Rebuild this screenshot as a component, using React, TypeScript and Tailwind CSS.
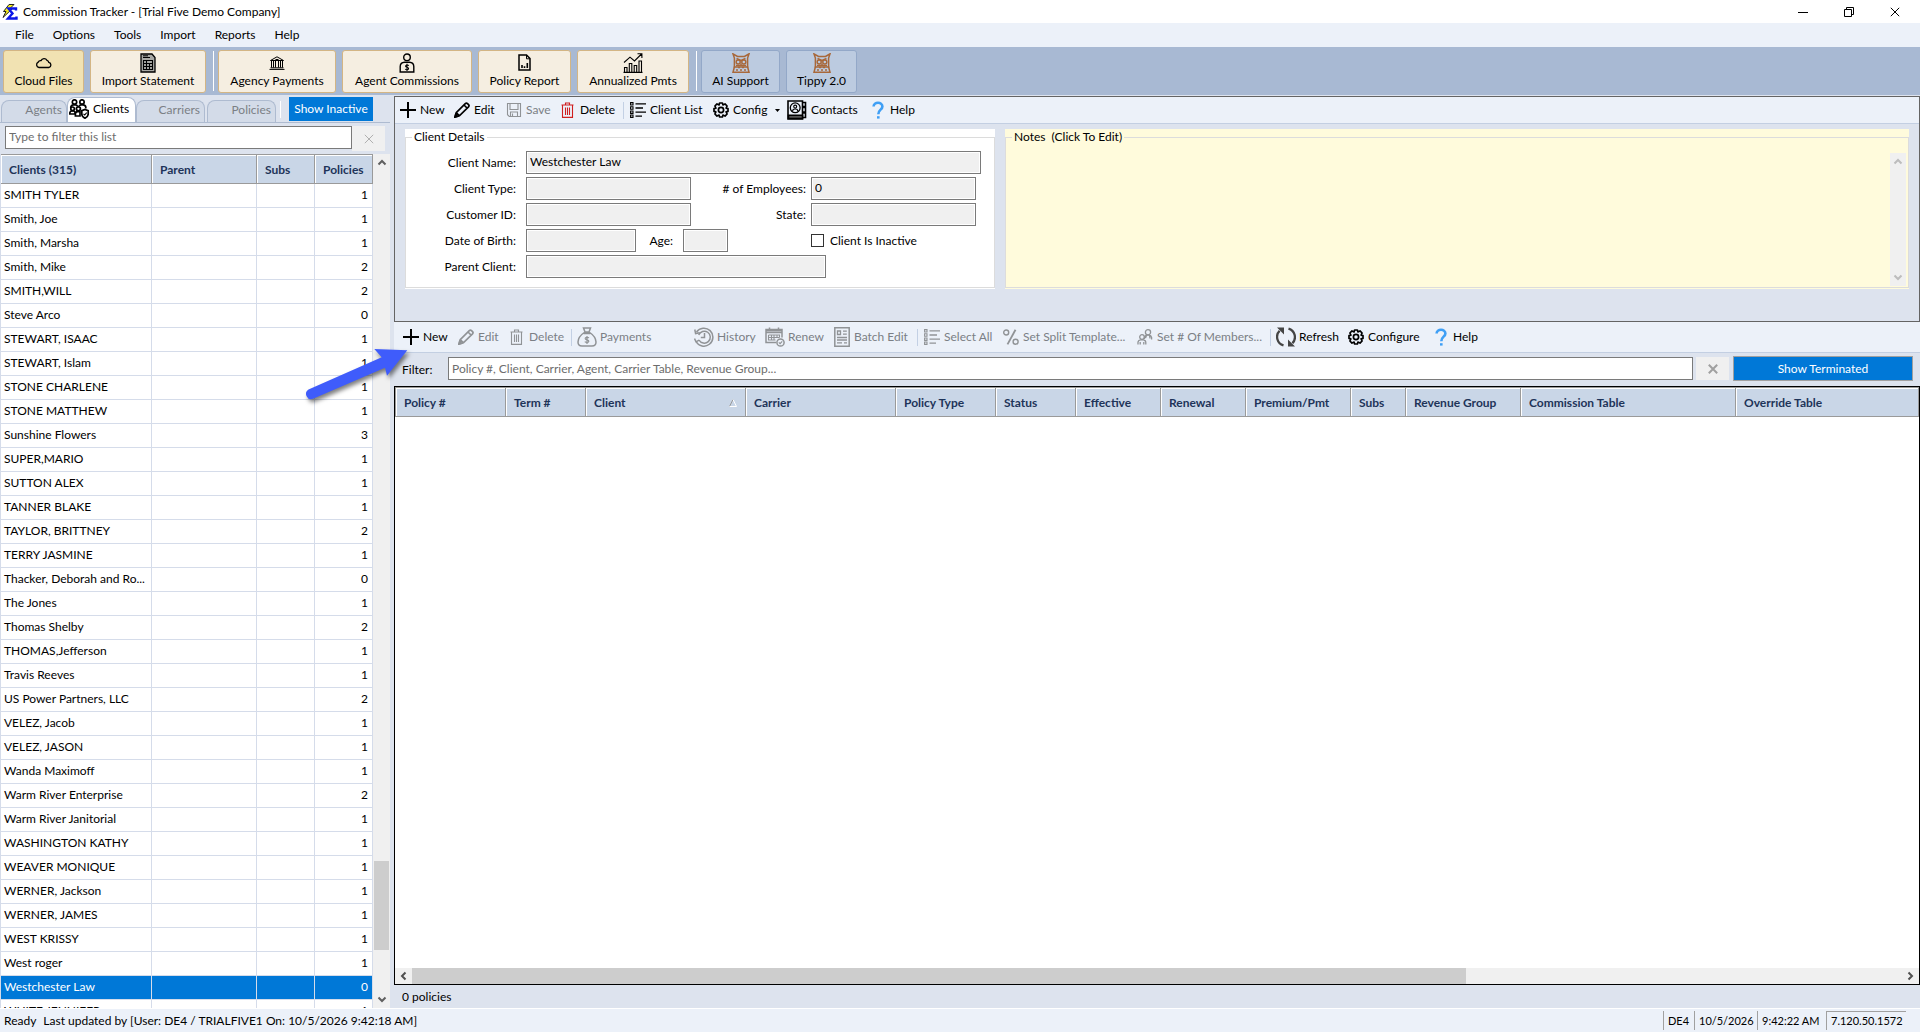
import { useState } from "react";
import type { ReactNode } from "react";

type Client = { name: string; policies: number };

const clients: Client[] = [
  { name: "SMITH TYLER", policies: 1 },
  { name: "Smith, Joe", policies: 1 },
  { name: "Smith, Marsha", policies: 1 },
  { name: "Smith, Mike", policies: 2 },
  { name: "SMITH,WILL", policies: 2 },
  { name: "Steve Arco", policies: 0 },
  { name: "STEWART, ISAAC", policies: 1 },
  { name: "STEWART, Islam", policies: 1 },
  { name: "STONE CHARLENE", policies: 1 },
  { name: "STONE MATTHEW", policies: 1 },
  { name: "Sunshine Flowers", policies: 3 },
  { name: "SUPER,MARIO", policies: 1 },
  { name: "SUTTON ALEX", policies: 1 },
  { name: "TANNER BLAKE", policies: 1 },
  { name: "TAYLOR, BRITTNEY", policies: 2 },
  { name: "TERRY JASMINE", policies: 1 },
  { name: "Thacker, Deborah and Ro...", policies: 0 },
  { name: "The Jones", policies: 1 },
  { name: "Thomas Shelby", policies: 2 },
  { name: "THOMAS,Jefferson", policies: 1 },
  { name: "Travis Reeves", policies: 1 },
  { name: "US Power Partners, LLC", policies: 2 },
  { name: "VELEZ, Jacob", policies: 1 },
  { name: "VELEZ, JASON", policies: 1 },
  { name: "Wanda Maximoff", policies: 1 },
  { name: "Warm River Enterprise", policies: 2 },
  { name: "Warm River Janitorial", policies: 1 },
  { name: "WASHINGTON KATHY", policies: 1 },
  { name: "WEAVER MONIQUE", policies: 1 },
  { name: "WERNER, Jackson", policies: 1 },
  { name: "WERNER, JAMES", policies: 1 },
  { name: "WEST KRISSY", policies: 1 },
  { name: "West roger", policies: 1 },
  { name: "Westchester Law", policies: 0 },
  { name: "WHITE JENNIFER", policies: 1 },
];

const policyColumns = [
  { label: "Policy #", width: "w-[110px]" },
  { label: "Term #", width: "w-[80px]" },
  { label: "Client", width: "w-[160px]", sorted: true },
  { label: "Carrier", width: "w-[150px]" },
  { label: "Policy Type", width: "w-[100px]" },
  { label: "Status", width: "w-[80px]" },
  { label: "Effective", width: "w-[85px]" },
  { label: "Renewal", width: "w-[85px]" },
  { label: "Premium/Pmt", width: "w-[105px]" },
  { label: "Subs", width: "w-[55px]" },
  { label: "Revenue Group", width: "w-[115px]" },
  { label: "Commission Table", width: "w-[215px]" },
  { label: "Override Table", width: "" },
];

/* ---------- icons ---------- */

const Svg = ({
  w = 16,
  h = 16,
  box,
  sw = 1.5,
  children,
}: {
  w?: number;
  h?: number;
  box?: string;
  sw?: number;
  children: ReactNode;
}) => (
  <svg
    width={w}
    height={h}
    viewBox={box ?? `0 0 ${w} ${h}`}
    fill="none"
    stroke="currentColor"
    strokeWidth={sw}
    className="shrink-0"
    aria-hidden="true"
  >
    {children}
  </svg>
);

const AppLogo = () => (
  <Svg>
    <path d="M7 .5 12 .5 7.5 5H10L1 13.5 4 7.5H1.5Z" fill="#f5ee1c" stroke="#222" strokeWidth={1} />
    <path d="M14 6.5V4.5H6.5L10.5 9.5 6 14.5H14.5V12.5" stroke="#0b16e8" strokeWidth={2.4} />
  </Svg>
);

const CloudIcon = () => (
  <Svg w={17} h={12} sw={1.3}>
    <path d="M4 10.5A2.8 2.8 0 0 1 3.2 5.2 2.6 2.6 0 0 1 6 3.6 3.4 3.4 0 0 1 12 3.3 2.8 2.8 0 0 1 13.8 5.4 2.6 2.6 0 0 1 13.8 10.5Z" />
  </Svg>
);

const StatementIcon = () => (
  <Svg w={16} h={20} sw={1.3}>
    <path d="M1 1H12L15 4.5V19H1Z" fill="#a8a8a4" />
    <path d="M3 4.5H10M3 2.8H8" strokeWidth={1} />
    <path d="M3.5 7.5H12.5V16.5H3.5ZM3.5 10.5H12.5M3.5 13.5H12.5M6.5 7.5V16.5M9.5 10.5V16.5" strokeWidth={1.1} />
  </Svg>
);

const BankIcon = () => (
  <Svg w={16} h={14} sw={1}>
    <path d="M1.5 4.5 8 .8 14.5 4.5ZM.5 13.4H15.5M1.5 11.8H14.5M2.5 5V11.5M4.5 5V11.5M6.5 5V11.5M9.5 5V11.5M11.5 5V11.5M13.5 5V11.5" />
    <path d="M6.5 3.5H9.5" />
  </Svg>
);

const AgentIcon = () => (
  <Svg w={16} h={20} sw={1.4}>
    <circle cx="8" cy="4.3" r="3.3" />
    <path d="M1.2 19V13.5A4.5 4.5 0 0 1 5.5 9.2H10.5A4.5 4.5 0 0 1 14.8 13.5V19Z" />
    <path d="M9.8 12.6C8.8 11.6 6.4 11.9 6.6 13.3 6.9 14.6 9.5 14.1 9.6 15.6 9.6 17 7.2 17.1 6.2 16M8 10.8V18" strokeWidth={1.1} />
  </Svg>
);

const ReportIcon = () => (
  <Svg w={13} h={17} sw={1.5}>
    <path d="M1 1H8.5L12 4.5V16H1Z" />
    <path d="M8.5 1V4.8H12" strokeWidth={1} />
    <path d="M4 14V11M6.5 14V12.2M9.3 14V9" strokeWidth={1.6} />
  </Svg>
);

const ChartIcon = () => (
  <Svg w={20} h={20} sw={1.1}>
    <path d="M.5 19.4H19.5M1.5 19V14.5H4V19M6.3 19V10.5H8.8V19M11.2 19V12.5H13.7V19M16 19V8H18.5V19" />
    <path d="M1 9.5 7 4.2 11.5 8 18.5 1M14.5 .8H18.9V5" />
  </Svg>
);

const OwlIcon = () => (
  <Svg w={18} h={20} sw={1.5}>
    <g stroke="#a8683a">
      <path d="M1 .8 5.5 3.5H12.5L17 .8 15.6 5V14H2.4V5Z" />
      <path d="M2.5 13.5 1 19.2H17L15.5 13.5" />
      <path d="M4.5 5.5 9 7.5 13.5 5.5M4 17H6M8 17H10M12 17H14M6 14.5H8M10 14.5H12" />
      <circle cx="6.2" cy="9" r="2" />
      <circle cx="11.8" cy="9" r="2" />
      <path d="M9 10.5V13M4 12.5H14" />
    </g>
  </Svg>
);

const GroupIcon = () => (
  <Svg w={20} h={20} sw={1.7}>
    <circle cx="5.5" cy="3" r="2.2" />
    <circle cx="13" cy="3" r="2.2" />
    <path d="M1.8 9V8A2.8 2.8 0 0 1 4.5 5.8H6.5A2.8 2.8 0 0 1 8.8 7.5M9.8 7.5A2.8 2.8 0 0 1 12 5.8H14A2.8 2.8 0 0 1 16.8 8V9.5" />
    <circle cx="3.6" cy="9.8" r="1.8" />
    <circle cx="9.4" cy="9.8" r="2" />
    <path d="M.8 15V14A2.2 2.2 0 0 1 3 12H4.5A2 2 0 0 1 6 13V15ZM6.4 17V14.8A2.4 2.4 0 0 1 8.6 12.6H11V17Z" />
    <path d="M16 10.5 19.2 11.7V15C19.2 17 17.6 18.4 16 19.2 14.4 18.4 12.8 17 12.8 15V11.7Z" />
    <path d="M14.5 14.8 15.7 16 17.7 13.6" strokeWidth={1.1} />
  </Svg>
);

const PlusIcon = () => (
  <Svg sw={2}>
    <path d="M8 0V16M0 8H16" />
  </Svg>
);

const PencilIcon = () => (
  <Svg sw={1.7}>
    <path d="M1 15 2.2 10.6 11.3 1.6A1.6 1.6 0 0 1 13.5 1.6L14.5 2.6A1.6 1.6 0 0 1 14.5 4.8L5.4 13.8ZM2.2 10.6 5.4 13.8M10 3 13 6" />
    <path d="M1 15 1.7 12.6 3.4 14.3Z" fill="currentColor" />
  </Svg>
);

const SaveIcon = () => (
  <Svg sw={1.1}>
    <path d="M1.5 1.5H14.5V14.5H3.3L1.5 12.7ZM4 1.5V7.5H12V1.5M4.5 14.5V10H11.5V14.5M6.5 11.5V14.5" />
  </Svg>
);

const TrashIcon = () => (
  <Svg sw={1.1}>
    <path d="M1.5 3H13.5M5.5 3V1H9.5V3M2.5 3.2V15.4H12.5V3.2M5.5 5.5V13M7.5 5.5V13M9.5 5.5V13" />
  </Svg>
);

const ListIcon = () => (
  <Svg sw={1.1}>
    <path d="M.6 .6H3V3H.6ZM.6 4.8H3V7.2H.6ZM.6 9H3V11.4H.6ZM.6 13H3V15.4H.6Z" />
    <path d="M5.5 1.8H16M5.5 6H13M5.5 10.2H16M5.5 14.2H12" strokeWidth={1.3} />
  </Svg>
);

const GearIcon = () => (
  <Svg sw={1.7}>
    <path d="M6.6 1H9.4L9.9 2.9 12 1.9 14.1 4 13.1 6.1 15 6.6V9.4L13.1 9.9 14.1 12 12 14.1 9.9 13.1 9.4 15H6.6L6.1 13.1 4 14.1 1.9 12 2.9 9.9 1 9.4V6.6L2.9 6.1 1.9 4 4 1.9 6.1 2.9Z" strokeLinejoin="round" />
    <circle cx="8" cy="8" r="2.6" />
  </Svg>
);

const ContactsIcon = () => (
  <Svg w={20} h={20} sw={1.6}>
    <path d="M1 1H15.5V19H1ZM15.5 2.5H18.5V6.5H15.5M15.5 7.5H18.5V12H15.5M15.5 13H18.5V17.5H15.5" />
    <path d="M1.5 15.2H15.5V18.5H1.5Z" fill="#555" />
    <circle cx="8.2" cy="7.8" r="4.9" strokeWidth={1.3} />
    <circle cx="8.2" cy="6.6" r="1.5" strokeWidth={1.1} />
    <path d="M5.6 11C5.8 8.4 10.6 8.4 10.8 11" strokeWidth={1.1} />
  </Svg>
);

const HelpIcon = () => (
  <Svg w={12} h={18} sw={2.6}>
    <g stroke="#3f9ff5">
      <path d="M1.6 5.6C1.6 .6 10.4 .6 10.4 5.4 10.4 8.8 6.3 8.6 6.3 13.2" />
      <path d="M6.3 15.2V17.6" />
    </g>
  </Svg>
);

const MoneyBagIcon = () => (
  <Svg w={20} h={20} sw={1.5}>
    <path d="M6.5 1H13.5L12 5H8ZM8 5C3.5 8 1 11.5 1 15 1 18 3 19 5 19H15C17 19 19 18 19 15 19 11.5 16.5 8 12 5M6.8 6.6H13.2" />
    <path d="M12 10.9C10.8 9.9 8 10.2 8.2 11.7 8.5 13.1 11.8 12.6 11.8 14.2 11.8 15.7 9 15.8 7.8 14.6M10 9V17" strokeWidth={1.2} />
  </Svg>
);

const HistoryIcon = () => (
  <Svg w={20} h={20} sw={1.5}>
    <path d="M2.5 5A9 9 0 1 1 2 14.5M.8 2.5 1.6 6.6 5.8 5.8M.5 11.5 2 14.8 5.2 13.2" />
    <path d="M4.7 8A6 6 0 1 1 5 13M10.5 6V10.5H6.8" />
  </Svg>
);

const RenewIcon = () => (
  <Svg w={20} h={20} sw={1.5}>
    <path d="M11 15.5H1V2.5H17V10.5M1 5.5H17M4.5 .5V4M13.5 .5V4" />
    <path d="M1 3.5H17" strokeWidth={2} />
    <path d="M3.5 8H14.5V10.5M3.5 8V13H10.5M3.5 10.5H14.5M6.5 8V13M9 8V13M12 8V10.5" strokeWidth={1.1} />
    <circle cx="15.5" cy="15.5" r="3.6" />
    <path d="M13.8 15.4 15.1 16.7 17.2 14.3" strokeWidth={1.1} />
  </Svg>
);

const BatchIcon = () => (
  <Svg w={16} h={20} sw={1.5}>
    <path d="M.8 .8H15.2V19.2H.8Z" />
    <path d="M3.5 4H6.5V7.5H3.5ZM9 4.2H12.8M9 7.2H12.8M3 10.5H13M3 13H13M3 15.8H8M10 15.8H13" strokeWidth={1.3} />
  </Svg>
);

const PercentIcon = () => (
  <Svg sw={1.4}>
    <circle cx="3.2" cy="3.5" r="2.5" />
    <circle cx="12.6" cy="12.7" r="2.5" />
    <path d="M12.5 .8 4.5 15.4" strokeWidth={1.8} />
  </Svg>
);

const MembersIcon = () => (
  <Svg sw={1.3}>
    <circle cx="11" cy="3.3" r="2.6" />
    <path d="M7.5 10V8.2A3 3 0 0 1 10 6.2H12A3 3 0 0 1 14.6 8.5V10.5M9.5 6.5 8.5 9M12.5 6.5 13 9.5" />
    <circle cx="5" cy="8" r="2.3" />
    <path d="M1 15.5V13A2.8 2.8 0 0 1 3.5 10.8H6.5A2.8 2.8 0 0 1 8.8 13.5V15.5M3.2 13V15.5M6.8 13V15.5" />
  </Svg>
);

const RefreshIcon = () => (
  <Svg w={20} h={20} sw={2.3}>
    <g stroke="#454545">
      <path d="M7.5 18.4A8.8 8.8 0 0 1 3.6 3.8" />
      <path d="M12.5 1.6A8.8 8.8 0 0 1 16.4 16.2" />
      <path d="M1 .6H8V7.6Z M19 19.4H12V12.4Z" fill="#454545" stroke="none" />
    </g>
  </Svg>
);

const Chevron = ({ dir }: { dir: "up" | "down" | "left" | "right" }) => {
  const paths = {
    up: "M1.5 6.5 5 3 8.5 6.5",
    down: "M1.5 3.5 5 7 8.5 3.5",
    left: "M6.5 1.5 3 5 6.5 8.5",
    right: "M3.5 1.5 7 5 3.5 8.5",
  };
  return (
    <Svg w={10} h={10} sw={2}>
      <path d={paths[dir]} />
    </Svg>
  );
};

const CloseX = ({ sw = 1 }: { sw?: number }) => (
  <Svg w={10} h={10} sw={sw}>
    <path d="M.8 .8 9.2 9.2M9.2 .8 .8 9.2" />
  </Svg>
);

/* ---------- small pieces ---------- */

const RibbonButton = ({
  label,
  icon,
  className,
}: {
  label: string;
  icon: ReactNode;
  className: string;
}) => (
  <button
    type="button"
    className={`flex h-[43px] flex-col items-center rounded-[3px] border pt-0.5 ${className}`}
  >
    <span className="flex h-5 items-center">{icon}</span>
    <span className="leading-4">{label}</span>
  </button>
);

const ToolButton = ({
  label,
  icon,
  className,
  iconClass = "w-4",
  disabled,
  caret,
}: {
  label: string;
  icon: ReactNode;
  className?: string;
  iconClass?: string;
  disabled?: boolean;
  caret?: boolean;
}) => (
  <button
    type="button"
    disabled={disabled}
    className={`flex shrink-0 items-center gap-1 whitespace-nowrap ${
      disabled ? "text-[#7b7f85]" : "text-black"
    } ${className ?? ""}`}
  >
    <span
      className={`flex shrink-0 justify-center ${iconClass} ${
        disabled ? "text-[#909396]" : ""
      }`}
    >
      {icon}
    </span>
    {label}
    {caret && (
      <svg width="5" height="3" viewBox="0 0 5 3" className="ml-1" aria-hidden="true">
        <path d="M0 0H5L2.5 3Z" fill="#000" />
      </svg>
    )}
  </button>
);

const Separator = () => (
  <span className="mr-1.5 h-[17px] w-px shrink-0 bg-[#c3d0e4]" />
);

const RibbonSeparator = () => <span className="-mr-0.5 ml-px h-10 w-px bg-white" />;

const fieldClass =
  "h-[23px] border border-[#7a7a7a] bg-[#f0f0f0] pl-[3px] pb-0.5 outline-none ring-1 ring-inset ring-white";

const Field = ({
  id,
  label,
  value = "",
  labelClass,
  inputClass,
}: {
  id: string;
  label: string;
  value?: string;
  labelClass: string;
  inputClass: string;
}) => (
  <>
    <label htmlFor={id} className={`shrink-0 text-right ${labelClass}`}>
      {label}
    </label>
    <input id={id} readOnly defaultValue={value} className={`${fieldClass} ${inputClass}`} />
  </>
);

/* ---------- sections ---------- */

const TitleBar = () => (
  <header className="flex h-[23px] shrink-0 items-center bg-white pr-0.5 pl-0.5">
    <AppLogo />
    <h1 className="ml-[5px]">Commission Tracker - [Trial Five Demo Company]</h1>
    <div className="ml-auto flex h-full items-center">
      <button type="button" aria-label="Minimize" className="flex w-[46px] justify-center">
        <Svg w={10} h={10} sw={1}>
          <path d="M0 5.5H10" />
        </Svg>
      </button>
      <button type="button" aria-label="Restore" className="flex w-[46px] justify-center">
        <Svg w={10} h={10} sw={1}>
          <path d="M.5 2.5H7.5V9.5H.5ZM2.5 2.5V.5H9.5V7.5H7.5" />
        </Svg>
      </button>
      <button type="button" aria-label="Close" className="flex w-[46px] justify-center">
        <CloseX />
      </button>
    </div>
  </header>
);

const MenuBar = () => (
  <nav className="flex h-6 shrink-0 items-center gap-[19px] bg-[#ecf1f9] pl-[15px]">
    {["File", "Options", "Tools", "Import", "Reports", "Help"].map((item) => (
      <a key={item} href="#">
        {item}
      </a>
    ))}
  </nav>
);

const Ribbon = () => {
  const cream = "border-[#d3b584] bg-[#f5eee1]";
  const blue = "border-[#93a8c8] bg-[#bccbe0]";
  return (
    <div className="flex h-12 shrink-0 items-center gap-1.5 bg-[#a8b9d3] pl-[3px]">
      <RibbonButton label="Cloud Files" icon={<CloudIcon />} className="w-[81px] border-[#d3b584] bg-[#f1e2b2]" />
      <RibbonButton label="Import Statement" icon={<StatementIcon />} className={`w-[116px] ${cream}`} />
      <RibbonSeparator />
      <RibbonButton label="Agency Payments" icon={<BankIcon />} className={`w-[118px] ${cream}`} />
      <RibbonButton label="Agent Commissions" icon={<AgentIcon />} className={`w-[130px] ${cream}`} />
      <RibbonButton label="Policy Report" icon={<ReportIcon />} className={`w-[93px] ${cream}`} />
      <RibbonButton label="Annualized Pmts" icon={<ChartIcon />} className={`w-[112px] ${cream}`} />
      <RibbonSeparator />
      <RibbonButton label="AI Support" icon={<OwlIcon />} className={`w-[79px] ${blue}`} />
      <RibbonButton label="Tippy 2.0" icon={<OwlIcon />} className={`w-[71px] ${blue}`} />
    </div>
  );
};

const SideTabs = () => {
  const idle =
    "h-[22px] rounded-t-lg border border-b-0 border-[#aebbd0] bg-[#d3dbe8] pr-1 pb-[3px] text-right text-[#7b7f85]";
  return (
    <div className="flex h-7 shrink-0 items-end border-b border-[#aebbd0] pl-px">
      <button type="button" className={`w-[66px] ${idle}`}>
        Agents
      </button>
      <button
        type="button"
        className="flex h-[25px] w-[69px] items-center gap-1 rounded-t-lg border border-b-0 border-[#aebbd0] bg-white pb-0.5 pl-px"
      >
        <GroupIcon />
        Clients
      </button>
      <button type="button" className={`w-[69px] ${idle}`}>
        Carriers
      </button>
      <button type="button" className={`ml-0.5 w-[69px] ${idle}`}>
        Policies
      </button>
      <span className="mx-1 mb-1 h-[17px] w-px bg-white" />
      <button type="button" className="ml-1 mb-px h-6 w-[84px] bg-[#0078d7] text-white">
        Show Inactive
      </button>
    </div>
  );
};

const headCell =
  "h-[30px] border-t border-r border-b border-[#9a9a9a] bg-[#c9d6e7] px-2 pt-0.5 text-left font-bold whitespace-nowrap text-[#1e3459] shadow-[inset_1px_1px_0_#fff]";

const Sidebar = () => {
  const [filter, setFilter] = useState("");
  const [selected, setSelected] = useState("Westchester Law");
  const shown = clients.filter((c) =>
    c.name.toLowerCase().includes(filter.toLowerCase())
  );

  return (
    <aside className="flex w-[390px] shrink-0 flex-col">
      <SideTabs />
      <div className="flex shrink-0 pt-[3px] pb-[3px] pl-[5px]">
        <input
          aria-label="Filter clients"
          placeholder="Type to filter this list"
          value={filter}
          onChange={(e) => setFilter(e.target.value)}
          className="h-[23px] w-[347px] border border-[#7a7a7a] bg-white pb-0.5 pl-[3px] outline-none placeholder:text-[#6d6d6d]"
        />
        <button
          type="button"
          aria-label="Clear filter"
          onClick={() => setFilter("")}
          className="flex h-[25px] w-[33px] items-center justify-center bg-[#f0f0f0] text-[#b0b0b0]"
        >
          <CloseX />
        </button>
      </div>
      <div className="flex min-h-0 flex-1 bg-white">
        <div className="flex-1 overflow-hidden">
          <table className="w-full table-fixed border-separate border-spacing-0 border-l border-[#d5dcea]">
            <thead>
              <tr>
                <th className={`w-[151px] ${headCell}`}>Clients (315)</th>
                <th className={`w-[105px] ${headCell}`}>Parent</th>
                <th className={`w-[58px] ${headCell}`}>Subs</th>
                <th className={headCell}>Policies</th>
              </tr>
            </thead>
            <tbody>
              {shown.map((c) => {
                const cell =
                  c.name === selected
                    ? "h-6 border-b border-r border-[#d5dcea] bg-[#0078d7] pb-0.5 text-white"
                    : "h-6 border-b border-r border-[#d5dcea] pb-0.5 text-black";
                return (
                  <tr key={c.name} onClick={() => setSelected(c.name)}>
                    <td className={`overflow-hidden pl-[3px] whitespace-nowrap ${cell}`}>{c.name}</td>
                    <td className={cell} />
                    <td className={cell} />
                    <td className={`pr-1 text-right ${cell}`}>{c.policies}</td>
                  </tr>
                );
              })}
            </tbody>
          </table>
        </div>
        <div className="flex w-[17px] flex-col items-center bg-[#f0f0f0] py-1 text-[#606060]">
          <Chevron dir="up" />
          <div className="flex-1" />
          <div className="mb-11 h-[89px] w-[15px] bg-[#cdcdcd]" />
          <Chevron dir="down" />
        </div>
      </div>
    </aside>
  );
};

const ClientToolbar = () => (
  <div className="flex h-[27px] shrink-0 items-center border-b border-[#c3cfe2] bg-[#ecf1f9] pl-[5px]">
    <ToolButton label="New" icon={<PlusIcon />} className="w-[54px]" />
    <ToolButton label="Edit" icon={<PencilIcon />} className="w-[52px]" />
    <ToolButton label="Save" icon={<SaveIcon />} disabled className="w-[54px]" />
    <ToolButton
      label="Delete"
      icon={
        <span className="text-[#cf1f1f]">
          <TrashIcon />
        </span>
      }
      className="w-[63px]"
    />
    <Separator />
    <ToolButton label="Client List" icon={<ListIcon />} className="w-[83px]" />
    <ToolButton label="Config" icon={<GearIcon />} caret className="w-[74px]" />
    <ToolButton label="Contacts" icon={<ContactsIcon />} iconClass="w-5" className="w-[83px]" />
    <ToolButton label="Help" icon={<HelpIcon />} />
  </div>
);

const ClientDetails = () => (
  <section className="relative w-[590px] shrink-0 bg-white pb-px">
    <div className="mt-2 h-[151px] border border-[#dcdcdc] pt-[13px]">
      <h2 className="absolute top-0 left-[7px] bg-white px-0.5 leading-4">Client Details</h2>
      <form className="flex flex-col gap-[3px]">
        <div className="flex items-center">
          <Field id="name" label="Client Name:" value="Westchester Law" labelClass="w-[110px] mr-2.5" inputClass="w-[455px]" />
        </div>
        <div className="flex items-center">
          <Field id="type" label="Client Type:" labelClass="w-[110px] mr-2.5" inputClass="w-[165px]" />
          <Field id="employees" label="# of Employees:" value="0" labelClass="w-[115px] mr-[5px]" inputClass="w-[165px]" />
        </div>
        <div className="flex items-center">
          <Field id="customer" label="Customer ID:" labelClass="w-[110px] mr-2.5" inputClass="w-[165px]" />
          <Field id="state" label="State:" labelClass="w-[115px] mr-[5px]" inputClass="w-[165px]" />
        </div>
        <div className="flex items-center">
          <Field id="dob" label="Date of Birth:" labelClass="w-[110px] mr-2.5" inputClass="w-[110px]" />
          <Field id="age" label="Age:" labelClass="w-[37px] mr-2.5" inputClass="w-[45px]" />
          <label className="ml-[83px] flex items-center gap-1.5">
            <input type="checkbox" className="size-[13px] appearance-none border border-[#333] bg-white" />
            Client Is Inactive
          </label>
        </div>
        <div className="flex items-center">
          <Field id="parent" label="Parent Client:" labelClass="w-[110px] mr-2.5" inputClass="w-[300px]" />
        </div>
      </form>
    </div>
  </section>
);

const Notes = () => (
  <section className="relative min-w-0 flex-1 bg-[#fffbdc] pb-px">
    <div className="mt-2 flex h-[151px] border border-[#dcdcdc] pt-[15px] pr-0.5 pb-px">
      <label htmlFor="notes" className="absolute top-0 left-[7px] bg-[#fffbdc] px-0.5 leading-4">
        Notes&nbsp; (Click To Edit)
      </label>
      <textarea id="notes" className="min-w-0 flex-1 resize-none bg-transparent outline-none" />
      <div className="flex w-4 flex-col items-center justify-between bg-[#f0f0f0] py-1 text-[#bdbdbd]">
        <Chevron dir="up" />
        <Chevron dir="down" />
      </div>
    </div>
  </section>
);

const PolicyToolbar = () => (
  <div className="flex h-[31px] shrink-0 items-center border-b border-[#c3cfe2] bg-[#ecf1f9] pl-[9px]">
    <ToolButton label="New" icon={<PlusIcon />} className="w-[55px]" />
    <ToolButton label="Edit" icon={<PencilIcon />} disabled className="w-[51px]" />
    <ToolButton label="Delete" icon={<TrashIcon />} disabled className="w-[62px]" />
    <Separator />
    <ToolButton label="Payments" icon={<MoneyBagIcon />} iconClass="w-[18px]" disabled className="w-[117px]" />
    <ToolButton label="History" icon={<HistoryIcon />} iconClass="w-[18px]" disabled className="w-[71px]" />
    <ToolButton label="Renew" icon={<RenewIcon />} iconClass="w-[18px]" disabled className="w-[68px]" />
    <ToolButton label="Batch Edit" icon={<BatchIcon />} disabled className="w-[83px]" />
    <Separator />
    <ToolButton label="Select All" icon={<ListIcon />} disabled className="w-[79px]" />
    <ToolButton label="Set Split Template..." icon={<PercentIcon />} disabled className="w-[134px]" />
    <ToolButton label="Set # Of Members..." icon={<MembersIcon />} disabled className="w-[133px]" />
    <Separator />
    <ToolButton label="Refresh" icon={<RefreshIcon />} iconClass="w-[18px]" className="w-[71px]" />
    <ToolButton label="Configure" icon={<GearIcon />} className="w-[85px]" />
    <ToolButton label="Help" icon={<HelpIcon />} />
  </div>
);

const PolicyGrid = () => (
  <div className="flex min-h-0 flex-1 flex-col border border-black bg-white">
    <div className="min-h-0 flex-1 overflow-hidden">
      <table className="w-full table-fixed border-separate border-spacing-0 border-l border-[#9a9a9a]">
        <thead>
          <tr>
            {policyColumns.map((col) => (
              <th key={col.label} className={`${headCell} ${col.width}`}>
                <span className="flex items-center justify-between">
                  {col.label}
                  {col.sorted && (
                    <svg width="8" height="8" viewBox="0 0 8 8" fill="none" aria-hidden="true">
                      <path d="M.5 7.5 4 .5" stroke="#9a9a9a" />
                      <path d="M4 .5 7.5 7.5H.5" stroke="#fff" />
                    </svg>
                  )}
                </span>
              </th>
            ))}
          </tr>
        </thead>
      </table>
    </div>
    <div className="flex h-4 shrink-0 items-center bg-[#f0f0f0] px-1 text-[#505050]">
      <Chevron dir="left" />
      <div className="ml-[3px] h-4 flex-[12] bg-[#cdcdcd]" />
      <div className="flex-[5]" />
      <Chevron dir="right" />
    </div>
  </div>
);

const PolicyFilter = () => (
  <div className="flex h-[33px] shrink-0 items-center pt-0.5 pr-[7px] pb-1 pl-2">
    <label htmlFor="policy-filter" className="w-[46px] pt-0.5">
      Filter:
    </label>
    <input
      id="policy-filter"
      placeholder="Policy #, Client, Carrier, Agent, Carrier Table, Revenue Group..."
      className="h-[23px] min-w-0 flex-1 border border-[#7a7a7a] bg-white pb-px pl-[3px] outline-none placeholder:text-[#6d6d6d]"
    />
    <button
      type="button"
      aria-label="Clear policy filter"
      className="ml-[3px] flex h-[23px] w-[33px] items-center justify-center bg-[#f0f0f0] text-[#a0a0a0]"
    >
      <CloseX sw={2} />
    </button>
    <button
      type="button"
      className="ml-1 h-[25px] w-[180px] border border-[#a0a0a0] bg-[#0078d7] text-white"
    >
      Show Terminated
    </button>
  </div>
);

const StatusBar = () => (
  <footer className="flex h-6 shrink-0 items-center border-t border-white bg-[#ecf1f9] pl-1">
    <span>Ready</span>
    <span className="ml-[7px]">Last updated by [User: DE4 / TRIALFIVE1 On: 10/5/2026 9:42:18 AM]</span>
    <div className="mr-3.5 ml-auto flex h-[19px] text-[11px] leading-[19px]">
      <span className="w-[31px] border-l border-[#a0a0a0] pl-1">DE4</span>
      <span className="w-[63px] border-l border-[#a0a0a0] pl-1">10/5/2026</span>
      <span className="w-[69px] border-l border-[#a0a0a0] pl-1">9:42:22 AM</span>
      <span className="w-20 border-t border-l border-[#a0a0a0] pl-1 leading-[17px]">7.120.50.1572</span>
    </div>
  </footer>
);

const PointerArrow = () => (
  <svg
    width="116"
    height="68"
    viewBox="0 0 116 68"
    className="pointer-events-none absolute top-[340px] left-[300px] drop-shadow-[2px_3px_2px_rgba(0,0,0,0.5)]"
    aria-hidden="true"
  >
    <path
      d="M8.5 49.5 81.7 17.3 74.3 9 107.3 10.3 87 35.7 85 27.7 13 58.8A5.2 5.2 0 0 1 8.5 49.5Z"
      fill="#3f5cfb"
    />
  </svg>
);

export default function App() {
  return (
    <div className="relative flex h-screen flex-col overflow-hidden bg-[#dde3ee] font-['Lato','Open_Sans',sans-serif] text-[12px] leading-4 text-black">
      <TitleBar />
      <MenuBar />
      <Ribbon />
      <div className="flex min-h-0 flex-1">
        <Sidebar />
        <main className="ml-1 flex min-w-0 flex-1 flex-col pt-px">
          <div className="flex shrink-0 flex-col border border-[#646464]">
            <ClientToolbar />
            <div className="flex gap-2.5 pt-[5px] pr-2.5 pb-8 pl-2.5">
              <ClientDetails />
              <Notes />
            </div>
          </div>
          <PolicyToolbar />
          <PolicyFilter />
          <PolicyGrid />
          <p className="h-[23px] shrink-0 pt-1 pl-2">0 policies</p>
        </main>
      </div>
      <StatusBar />
      <PointerArrow />
    </div>
  );
}
